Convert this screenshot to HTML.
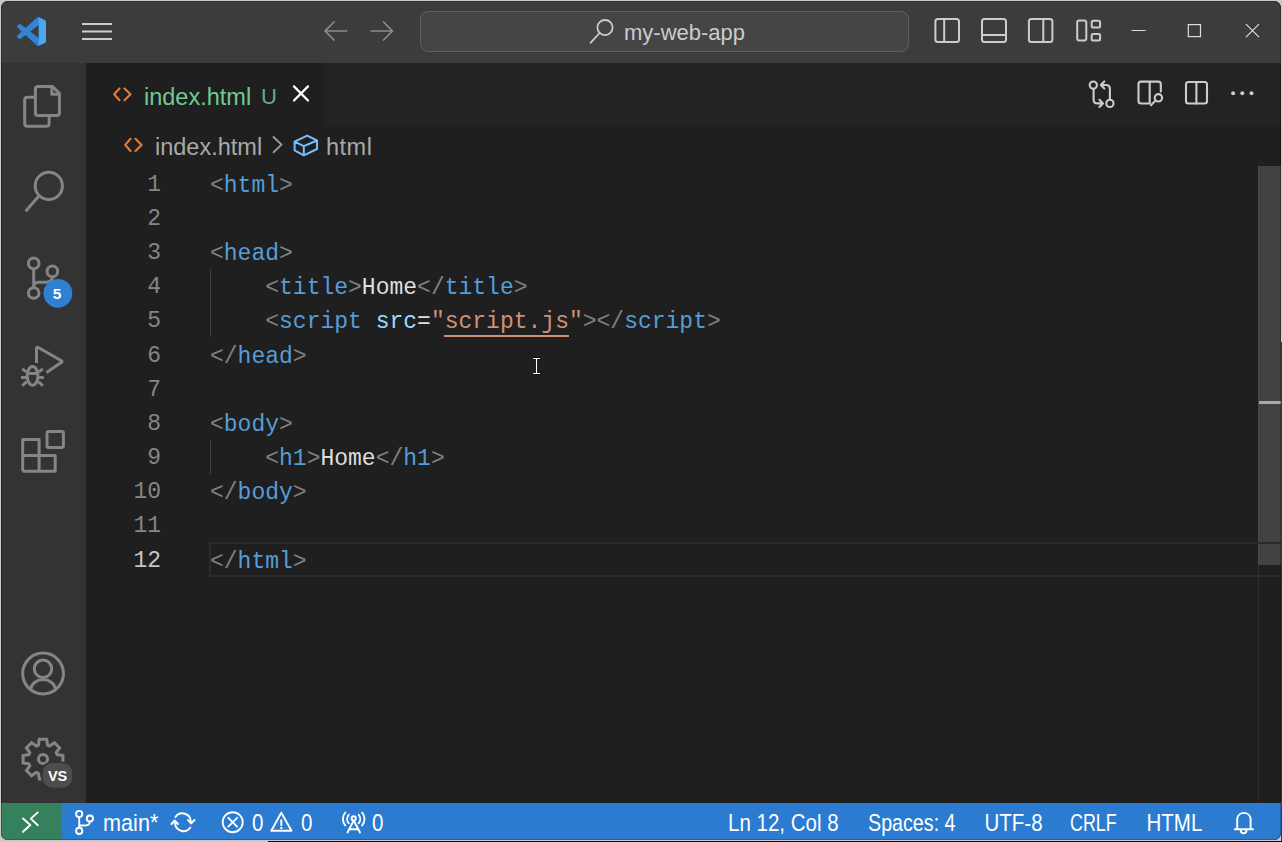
<!DOCTYPE html>
<html><head><meta charset="utf-8">
<style>
html,body{margin:0;padding:0;}
body{width:1282px;height:842px;position:relative;overflow:hidden;background:#cacaca;font-family:"Liberation Sans",sans-serif;}
.abs{position:absolute;}
#win{position:absolute;left:1px;top:1px;width:1280px;height:839px;border-radius:7px;overflow:hidden;background:#1f1f1f;}
#inner{position:absolute;left:-1px;top:-1px;width:1282px;height:842px;}
svg.full{position:absolute;left:0;top:0;width:1282px;height:842px;}
.t{position:absolute;white-space:pre;line-height:1;}
.code{position:absolute;left:210px;margin-top:1px;height:34px;line-height:34px;font-family:"Liberation Mono",monospace;font-size:23px;white-space:pre;color:#dedede;}
.ln{position:absolute;left:80px;width:81px;height:34px;line-height:34px;text-align:right;font-family:"Liberation Mono",monospace;font-size:23px;color:#858585;}
.g{color:#808080}.b{color:#569cd6}.a{color:#9cdcfe}.s{color:#ce9178}.w{color:#d4d4d4}
.sb{position:absolute;top:803px;height:37px;color:#ffffff;font-size:20.5px;line-height:37px;white-space:pre;transform-origin:0 12px;transform:scale(1,1.143);}
</style></head><body>
<div class="abs" style="left:1281px;top:342px;width:1px;height:500px;background:#3a3a3a"></div>
<div class="abs" style="left:268px;top:841px;width:1014px;height:1px;background:#0a0a0a"></div>
<div id="win"><div id="inner">
  <!-- title bar -->
  <div class="abs" style="left:0;top:0;width:1282px;height:63px;background:#3c3c3c"></div>
  <!-- activity bar -->
  <div class="abs" style="left:0;top:63px;width:86px;height:740px;background:#333333"></div>
  <!-- tab bar -->
  <div class="abs" style="left:86px;top:63px;width:1196px;height:63px;background:#232323"></div>
  <div class="abs" style="left:86px;top:63px;width:239px;height:63px;background:#1f1f1f"></div>
  <!-- status bar -->
  <div class="abs" style="left:0;top:803px;width:1282px;height:39px;background:#2b7bd0"></div>
  <div class="abs" style="left:0;top:803px;width:62px;height:39px;background:#34815c"></div>

  <!-- search box -->
  <div class="abs" style="left:420px;top:11px;width:487px;height:39px;border:1px solid #5f5f5f;border-radius:8px;background:#454545;box-sizing:content-box"></div>
  <div class="t" style="left:624px;top:22px;font-size:22px;color:#cccccc">my-web-app</div>

  <!-- tab -->
  <div class="t" style="left:144px;top:86px;font-size:23.5px;color:#73c991">index.html</div>
  <div class="t" style="left:261px;top:86px;font-size:22px;color:#6fa883">U</div>

  <!-- breadcrumbs -->
  <div class="t" style="left:155px;top:136px;font-size:23.5px;color:#a9a9a9">index.html</div>
  <div class="t" style="left:326px;top:136px;font-size:23.5px;letter-spacing:0.5px;color:#a9a9a9">html</div>

  <!-- scrollbar -->
  <div class="abs" style="left:1258px;top:166px;width:1px;height:637px;background:#2e2e2e"></div>
  <div class="abs" style="left:1258px;top:166px;width:23px;height:399px;background:rgba(121,121,121,0.4)"></div>
  <div class="abs" style="left:1259px;top:401px;width:22px;height:3px;background:#a8a8a8"></div>

  <!-- indent guides -->
  <div class="abs" style="left:210px;top:269px;width:1px;height:68px;background:#404040"></div>
  <div class="abs" style="left:210px;top:440px;width:1px;height:34px;background:#404040"></div>

  <!-- line numbers -->
  <div class="ln" style="top:168px">1</div>
  <div class="ln" style="top:202px">2</div>
  <div class="ln" style="top:236px">3</div>
  <div class="ln" style="top:270px">4</div>
  <div class="ln" style="top:304px">5</div>
  <div class="ln" style="top:339px">6</div>
  <div class="ln" style="top:373px">7</div>
  <div class="ln" style="top:407px">8</div>
  <div class="ln" style="top:441px">9</div>
  <div class="ln" style="top:475px">10</div>
  <div class="ln" style="top:509px">11</div>
  <div class="ln" style="top:544px;color:#c6c6c6">12</div>

  <!-- current line highlight -->
  <div class="abs" style="left:209px;top:542px;width:1073px;height:31px;border:2px solid #2b2b2b;border-right:none"></div>

  <!-- code -->
  <div class="code" style="top:168px"><span class="g">&lt;</span><span class="b">html</span><span class="g">&gt;</span></div>
  <div class="code" style="top:236px"><span class="g">&lt;</span><span class="b">head</span><span class="g">&gt;</span></div>
  <div class="code" style="top:270px">    <span class="g">&lt;</span><span class="b">title</span><span class="g">&gt;</span>Home<span class="g">&lt;/</span><span class="b">title</span><span class="g">&gt;</span></div>
  <div class="code" style="top:304px">    <span class="g">&lt;</span><span class="b">script</span> <span class="a">src</span>=<span class="s">"script.js"</span><span class="g">&gt;&lt;/</span><span class="b">script</span><span class="g">&gt;</span></div>
  <div class="code" style="top:339px"><span class="g">&lt;/</span><span class="b">head</span><span class="g">&gt;</span></div>
  <div class="code" style="top:407px"><span class="g">&lt;</span><span class="b">body</span><span class="g">&gt;</span></div>
  <div class="code" style="top:441px">    <span class="g">&lt;</span><span class="b">h1</span><span class="g">&gt;</span>Home<span class="g">&lt;/</span><span class="b">h1</span><span class="g">&gt;</span></div>
  <div class="code" style="top:475px"><span class="g">&lt;/</span><span class="b">body</span><span class="g">&gt;</span></div>
  <div class="code" style="top:544px"><span class="g">&lt;/</span><span class="b">html</span><span class="g">&gt;</span></div>
  <div class="abs" style="left:444px;top:335px;width:125px;height:2px;background:#ce9178"></div>

  <!-- status bar text -->
  <div class="sb" style="left:103px;transform:scale(1.056,1.143)">main*</div>
  <div class="sb" style="left:252px">0</div>
  <div class="sb" style="left:301px">0</div>
  <div class="sb" style="left:372px">0</div>
  <div class="sb" style="left:728px">Ln 12, Col 8</div>
  <div class="sb" style="left:868px;transform:scale(0.96,1.143)">Spaces: 4</div>
  <div class="sb" style="left:984.5px">UTF-8</div>
  <div class="sb" style="left:1070px;transform:scale(0.872,1.143)">CRLF</div>
  <div class="sb" style="left:1146.5px">HTML</div>

  <svg class="full" viewBox="0 0 1282 842">
    <!-- VS Code logo -->
    <g transform="translate(17,17) scale(0.29)">
      <path fill="#2f84d6" d="M96.46 10.8L75.86.87a6.23 6.23 0 0 0-7.1 1.2L29.35 38.04 12.19 25.01a4.16 4.16 0 0 0-5.32.24L1.36 30.26a4.17 4.17 0 0 0 0 6.16L16.24 50 1.36 63.58a4.17 4.17 0 0 0 0 6.16l5.51 5.01a4.16 4.16 0 0 0 5.32.24l17.16-13.03 39.41 35.97a6.23 6.23 0 0 0 7.1 1.2l20.6-9.92A6.25 6.25 0 0 0 100 83.57V16.43a6.25 6.25 0 0 0-3.54-5.63zM75.02 72.7L45.11 50l29.91-22.7v45.4z"/>
      <path fill="#4aa6f2" d="M75 0.5 L96.46 10.8 A6.25 6.25 0 0 1 100 16.43 V83.57 A6.25 6.25 0 0 1 96.46 89.2 L75 99.5 Z"/>
    </g>
    <!-- hamburger -->
    <g fill="#cccccc"><rect x="82" y="23" width="30" height="2"/><rect x="82" y="30.5" width="30" height="2"/><rect x="82" y="38" width="30" height="2"/></g>
    <!-- nav arrows -->
    <g fill="none" stroke="#8c8c8c" stroke-width="1.7" stroke-linecap="round" stroke-linejoin="round">
      <path d="M325,31 H346.5 M334,22 L325,31 L334,40"/>
      <path d="M371,31 H392.5 M383.5,22 L392.5,31 L383.5,40"/>
    </g>
    <!-- title search icon -->
    <g fill="none" stroke="#cccccc" stroke-width="1.8">
      <circle cx="605" cy="27.6" r="7.6"/>
      <path d="M599.6,33 L590.5,42.8" stroke-linecap="round"/>
    </g>
    <!-- layout icons -->
    <g fill="none" stroke="#cccccc" stroke-width="2">
      <rect x="935.4" y="19" width="23.6" height="23" rx="2.5"/><path d="M944.2,19 V42"/>
      <rect x="982" y="19" width="24" height="23" rx="2.5"/><path d="M982,35 H1006"/>
      <rect x="1028.9" y="19" width="23.5" height="23" rx="2.5"/><path d="M1043.3,19 V42"/>
      <rect x="1077.2" y="20.4" width="9.1" height="20.1" rx="2"/>
      <rect x="1091.7" y="20.8" width="8.4" height="6.8" rx="1.5"/>
      <rect x="1091.7" y="34" width="8.4" height="6.6" rx="1.5"/>
    </g>
    <!-- window controls -->
    <g fill="none" stroke="#dddddd" stroke-width="1.2">
      <path d="M1131.5,30.5 H1145.5"/>
      <rect x="1188.3" y="24.6" width="12.2" height="12"/>
      <path d="M1246,24.2 L1259,37.2 M1259,24.2 L1246,37.2"/>
    </g>
    <!-- tab icon -->
    <g fill="none" stroke="#e37933" stroke-width="2.2" stroke-linecap="round" stroke-linejoin="round">
      <path d="M119.5,88.5 L114.2,94.3 L119.5,100.2 M124.5,88.5 L130.5,94.3 L124.5,100.2"/>
      <path d="M130.5,138.8 L125.2,144.9 L130.5,151 M135.5,138.8 L141.5,144.9 L135.5,151"/>
    </g>
    <!-- tab close -->
    <path d="M294,86.4 L308,100.5 M308,86.4 L294,100.5" stroke="#ffffff" stroke-width="2.2" fill="none" stroke-linecap="round"/>
    <!-- breadcrumb chevron -->
    <path d="M273.5,137 L281.5,144.6 L273.5,152.3" fill="none" stroke="#a0a0a0" stroke-width="1.8" stroke-linecap="round" stroke-linejoin="round"/>
    <!-- cube -->
    <g fill="none" stroke="#75beff" stroke-width="2" stroke-linejoin="round">
      <path d="M307.2,135.6 L294.6,141.7 V150.4 L303.8,155.4 L317,149 V140.5 Z M294.6,141.7 L303.8,146.2 L317,140.5 M303.8,146.2 V155.4"/>
    </g>
    <!-- editor actions -->
    <g fill="none" stroke="#cccccc" stroke-width="2.1" stroke-linecap="round" stroke-linejoin="round">
      <circle cx="1093.3" cy="85.1" r="3.6"/>
      <circle cx="1109.9" cy="103.4" r="3.6"/>
      <path d="M1093.6,88.8 V99.5 Q1093.6,103.4 1097.5,103.4 H1103 M1099.4,99.8 L1103,103.4 L1099.4,107"/>
      <path d="M1109.9,99.7 V89 Q1109.9,85 1106,85 H1101 M1104.3,81.4 L1100.8,85 L1104.3,88.6"/>
      <path d="M1160.8,91.6 V84.1 Q1160.8,81.6 1158.3,81.6 H1141 Q1138.5,81.6 1138.5,84.1 V101 Q1138.5,103.5 1141,103.5 H1149.7 M1149.7,81.6 V103.5"/>
      <circle cx="1158.4" cy="97.8" r="3.7"/>
      <path d="M1155.6,100.6 L1151,105.2"/>
      <rect x="1186" y="82" width="21" height="21.5" rx="2.5"/><path d="M1196.4,82 V103.5"/>
    </g>
    <g fill="#cccccc"><circle cx="1233.1" cy="93.3" r="2"/><circle cx="1242.3" cy="93.3" r="2"/><circle cx="1251.5" cy="93.3" r="2"/></g>

    <!-- activity bar icons -->
    <g fill="none" stroke="#858585" stroke-width="3" stroke-linejoin="round" stroke-linecap="butt">
      <!-- explorer -->
      <path d="M37.9,86.5 H52.5 L59.4,93.4 V113.1 Q59.4,115.6 56.9,115.6 H37.9 Q35.4,115.6 35.4,113.1 V89 Q35.4,86.5 37.9,86.5 Z"/>
      <path d="M51.8,86.5 V94.2 H59.4"/>
      <path d="M35.4,97.2 H27.2 Q24.7,97.2 24.7,99.7 V123.8 Q24.7,126.3 27.2,126.3 H46.6 Q49.1,126.3 49.1,123.8 V115.6"/>
      <!-- search -->
      <circle cx="48.8" cy="185.9" r="13.6"/>
      <path d="M38.6,196.3 L25.6,211.3"/>
      <!-- scm -->
      <circle cx="33.7" cy="263.4" r="5.3"/>
      <circle cx="52.4" cy="271.4" r="5.3"/>
      <circle cx="33.7" cy="293" r="5.3"/>
      <path d="M33.7,268.7 V287.7"/>
      <path d="M52.4,276.7 C52.4,281 49.5,282.2 45.5,282.2 H38.5 C35.5,282.2 33.7,284 33.7,287"/>
      <!-- debug -->
      <path d="M36.5,363 V348.5 Q36.5,346.5 38.3,347.5 L61.5,360.8 Q62.6,361.5 61.5,362.3 L46.5,372.5"/>
      <ellipse cx="32.55" cy="375.85" rx="5.35" ry="9.35"/>
      <path d="M27.2,373.4 H37.9 M21,377.5 H26.5 M38.6,377.5 H43.8 M22.3,368.9 L26.3,371.9 M42.8,368.9 L38.8,371.9 M22.3,385.8 L26.6,381.6 M42.8,385.8 L38.5,381.6"/>
      <!-- extensions -->
      <path d="M22.7,471.3 V439.4 H39.1 V471.3 M22.7,455.6 H55.2 V471.3 H22.7"/>
      <rect x="47" y="431.6" width="16.4" height="15.9" rx="1.5"/>
      <!-- account -->
      <circle cx="43.05" cy="673.5" r="20.4"/>
      <circle cx="43" cy="668.8" r="8.7"/>
      <path d="M30.8,688.8 A12.4,10.6 0 0 1 55.4,688.8"/>
      <!-- gear -->
      <path stroke-linejoin="miter" d="M38.4,745.1 L39.3,739.3 L46.7,739.3 L47.6,745.1 L49.7,746.0 L54.4,742.6 L59.6,747.8 L56.2,752.5 L57.1,754.6 L62.9,755.5 L62.9,762.9 L57.1,763.8 L56.2,765.9 L59.6,770.6 L54.4,775.8 L49.7,772.4 L47.6,773.3 L46.7,779.1 L39.3,779.1 L38.4,773.3 L36.3,772.4 L31.6,775.8 L26.4,770.6 L29.8,765.9 L28.9,763.8 L23.1,762.9 L23.1,755.5 L28.9,754.6 L29.8,752.5 L26.4,747.8 L31.6,742.6 L36.3,746.0 Z"/>
      <circle cx="43" cy="759" r="4.6"/>
    </g>
    <!-- scm badge -->
    <circle cx="57.9" cy="293.3" r="14.4" fill="#2f7fd2"/>
    <text x="57.1" y="298.5" text-anchor="middle" font-family="Liberation Sans" font-weight="bold" font-size="15.5" fill="#ffffff">5</text>
    <!-- VS badge -->
    <rect x="41.2" y="761.4" width="32.5" height="27.9" rx="11" fill="#333333"/>
    <rect x="42.7" y="762.9" width="29.5" height="24.9" rx="10" fill="#4d4d4d"/>
    <text x="57.6" y="780.5" text-anchor="middle" font-family="Liberation Sans" font-weight="bold" font-size="14.5" fill="#ffffff">VS</text>

    <!-- status bar icons -->
    <g fill="none" stroke="#ffffff" stroke-width="1.9" stroke-linecap="round" stroke-linejoin="round">
      <path d="M23,818.5 L30.3,825 L23,831.8 M37.8,812.4 L30.8,818.6 L37.8,825.2"/>
      <circle cx="79.2" cy="814" r="3.1"/>
      <circle cx="79.2" cy="830.9" r="3.1"/>
      <circle cx="89.9" cy="818.6" r="3.1"/>
      <path d="M79.2,817.1 V827.8 M89.9,821.7 C89.9,825 87,825.5 84,825.5 H79.2"/>
      <!-- sync -->
      <path d="M175.5,817 A8.4,8.4 0 0 1 190.8,821.5 M188,820 L191,823.5 L194.5,820"/>
      <path d="M190.3,827.5 A8.4,8.4 0 0 1 175,822.8 M171.5,824 L174.6,820.5 L178,824"/>
      <!-- error -->
      <circle cx="232.7" cy="822.2" r="10"/>
      <path d="M228.3,817.8 L237.1,826.6 M237.1,817.8 L228.3,826.6"/>
      <!-- warning -->
      <path d="M281.3,812.8 L271.3,830.8 H291.5 Z"/>
      <path d="M281.3,820.2 V825.3"/>
      <!-- broadcast -->
      <circle cx="353.7" cy="818.4" r="2.1"/>
      <path d="M347.5,832.5 L353.7,820.5 L360,832.5 M349.2,829.2 H358.2"/>
      <path d="M345.3,812.5 A10,10 0 0 0 345.3,825.5 M348.7,814.8 A6.5,6.5 0 0 0 348.7,823.2 M362.1,812.5 A10,10 0 0 1 362.1,825.5 M358.7,814.8 A6.5,6.5 0 0 1 358.7,823.2"/>
      <!-- bell -->
      <path d="M1237.2,828.8 V818.5 A6.8,6.8 0 0 1 1250.6,818.5 V828.8 M1234.8,829.2 H1253 M1240.8,830.5 A2.8,2.8 0 0 0 1246.4,830.5"/>
    </g>
    <rect x="280.3" y="827" width="2" height="2" fill="#ffffff"/>
    <!-- I-beam -->
    <g stroke="#000" stroke-width="3" fill="none" opacity="0.7"><path d="M533,358.5 H540 M536.5,358.5 V373.5 M533,373.5 H540"/></g>
    <g stroke="#ffffff" stroke-width="1.2" fill="none"><path d="M533,358.5 H540 M536.5,358.5 V373.5 M533,373.5 H540"/></g>
  </svg>
</div></div>
<div class="abs" style="left:1px;top:1px;width:1280px;height:839px;box-sizing:border-box;border:1px solid rgba(0,0,0,0.22);border-radius:7px"></div>
</body></html>
